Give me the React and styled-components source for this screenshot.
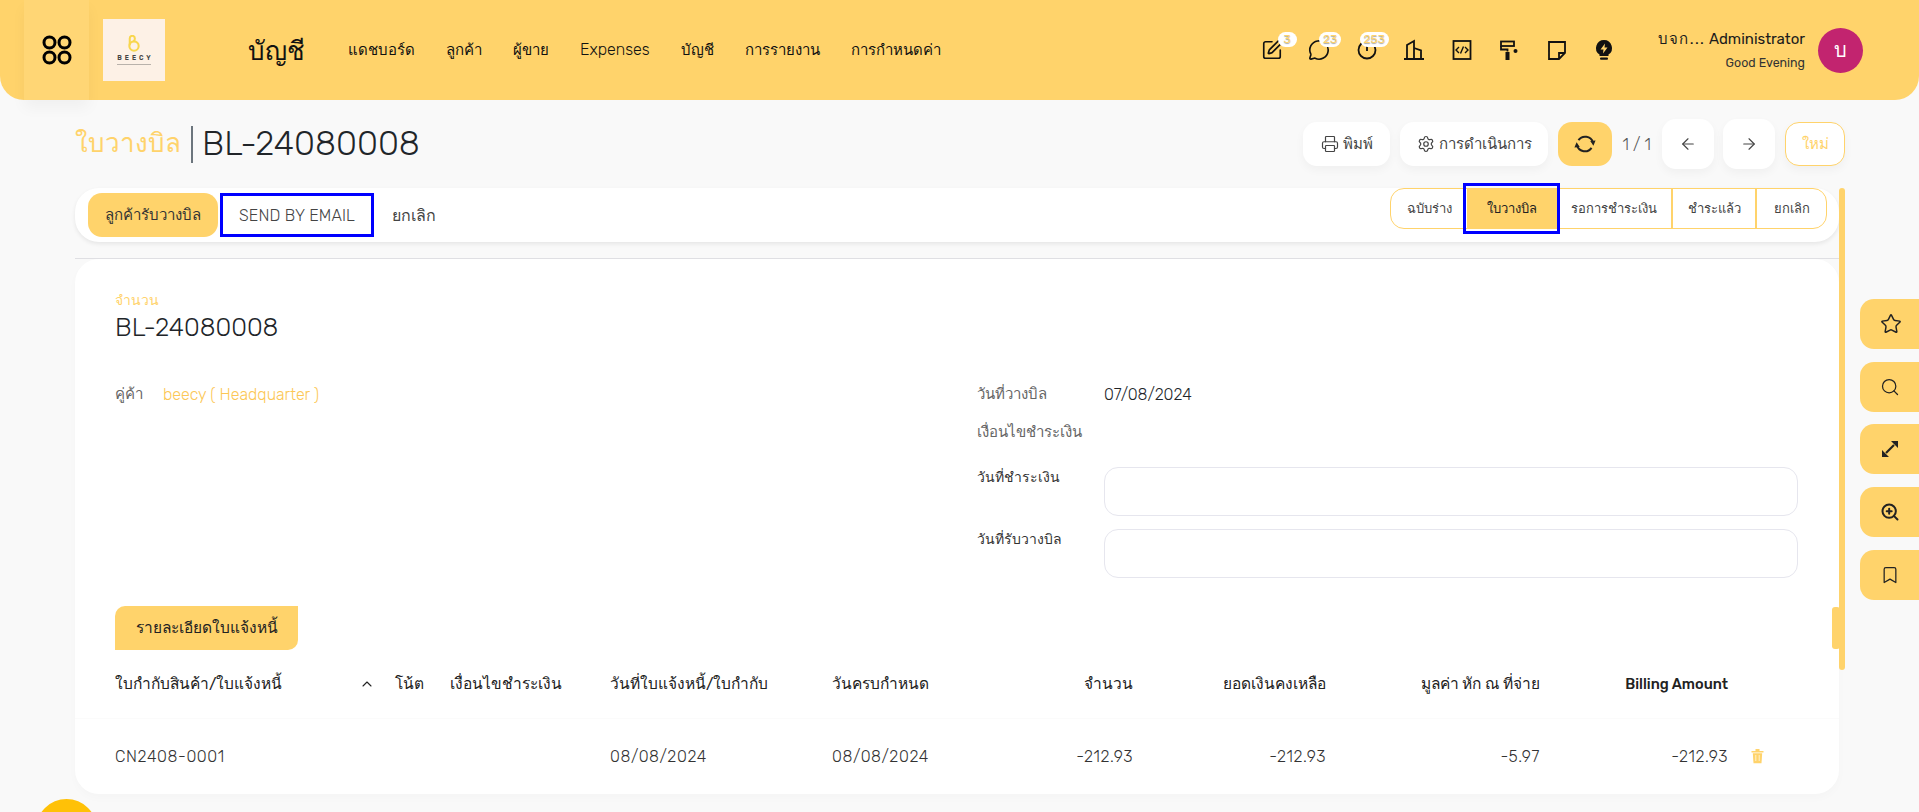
import React from 'react';
import styled, { createGlobalStyle } from 'styled-components';
import {
  ArrowLeft,
  ArrowRight,
  ChevronUp,
  Printer,
  Search,
  Settings,
  SquarePen,
  MessageCircle,
  Star,
  Bookmark,
  ZoomIn,
} from 'lucide-react';

const YELLOW = '#ffd36b';
const FONT = 'Rubik, Inter, "Noto Sans", "Liberation Sans", sans-serif';

const GlobalStyle = createGlobalStyle`
  html, body {
    margin: 0;
    height: 812px;
    overflow: hidden;
    background: #f9f9f9;
    font-family: ${FONT};
    color: #212529;
  }
  * { box-sizing: border-box; }
`;

const Page = styled.div`
  position: relative;
  width: 1919px;
  height: 812px;
  overflow: hidden;
`;

// Header
const Header = styled.header`
  height: 100px;
  padding-left: 24px;
  display: flex;
  align-items: center;
  background: ${YELLOW};
  border-radius: 0 0 24px 24px;
`;

const AppsButton = styled.div`
  width: 65px;
  height: 100px;
  display: flex;
  align-items: center;
  justify-content: center;
  background: #ffd675;
  box-shadow: 0 8px 14px rgba(0, 0, 0, 0.04);
`;

const LogoBox = styled.div`
  width: 62px;
  height: 62px;
  margin-left: 14px;
  background: #fdf1e6;
  display: flex;
  flex-direction: column;
  align-items: center;
  justify-content: center;
`;

const LogoText = styled.span`
  font-size: 6.5px;
  line-height: 8px;
  font-weight: 600;
  letter-spacing: 3px;
  margin-right: -3px;
  color: #444;
  margin-top: 2px;
`;

const LogoTagline = styled.span`
  width: 34px;
  height: 1px;
  margin-top: 2px;
  background: #b9b2ab;
`;

const ModuleTitle = styled.div`
  width: 100px;
  margin-left: 83px;
  font-size: 26px;
  font-weight: 300;
  color: #111;
`;

const Nav = styled.nav`
  display: flex;
  gap: 31px;
`;

const NavItem = styled.span`
  font-size: ${(p) => (p.$latin ? 16 : 15)}px;
  line-height: 22px;
  font-weight: 300;
  color: #111;
`;

const IconBar = styled.div`
  margin-left: auto;
  display: flex;
  gap: 25.5px;
`;

const IconSlot = styled.div`
  position: relative;
  width: 22px;
  height: 22px;
  color: #111;
`;

const Badge = styled.span`
  position: absolute;
  top: -7px;
  left: ${(p) => p.$left}px;
  min-width: 19px;
  height: 15px;
  padding: 0 4px;
  border-radius: 8px;
  background: #fff;
  color: ${YELLOW};
  font-size: 12px;
  line-height: 15px;
  text-align: center;
  text-shadow: 0 1px 1px rgba(0, 0, 0, 0.35);
`;

const UserBlock = styled.div`
  width: 180px;
  text-align: right;
  margin-left: 10px;
`;

const UserName = styled.div`
  font-size: 15px;
  line-height: 22px;
  color: #1c1c1c;
`;

const CompanyShort = styled.span`
  letter-spacing: 1.4px;
`;

const Greeting = styled.div`
  font-size: 12.4px;
  line-height: 18px;
  margin-top: 4px;
  color: #333;
`;

const Avatar = styled.div`
  width: 45px;
  height: 45px;
  margin: 0 56px 0 13px;
  border-radius: 50%;
  background: #c2246f;
  color: #fff;
  font-size: 20px;
  display: flex;
  align-items: center;
  justify-content: center;
`;

// Page content
const Main = styled.main`
  padding: 19px 74px 0 75px;
`;

const TitleRow = styled.div`
  height: 50px;
  display: flex;
  align-items: center;
  justify-content: space-between;
`;

const Title = styled.h1`
  margin: 0;
  display: flex;
  align-items: center;
  font-size: 34px;
  line-height: 40px;
  font-weight: 300;
`;

const TitleModel = styled.span`
  color: ${YELLOW};
  font-size: 26px;
`;

const TitleBar = styled.span`
  width: 2px;
  height: 37px;
  margin: 0 9px 0 10px;
  background: #6c757d;
`;

const Actions = styled.div`
  display: flex;
  align-items: center;
  gap: 9.6px;
`;

const ActionButton = styled.button`
  height: ${(p) => (p.$tall ? 50 : 44)}px;
  width: ${(p) => p.$width}px;
  border: ${(p) => (p.$outline ? `1px solid ${YELLOW}` : 'none')};
  border-radius: 14px;
  background: ${(p) => (p.$primary ? YELLOW : '#fff')};
  color: ${(p) => (p.$outline ? YELLOW : '#444')};
  font: 400 15px ${FONT};
  display: flex;
  align-items: center;
  justify-content: center;
  gap: 4px;
  padding: 0;
  box-shadow: ${(p) => (p.$primary ? 'none' : '0 4px 10px rgba(0,0,0,0.04)')};
`;

const Pager = styled.span`
  font-size: 16px;
  font-weight: 300;
  color: #555;
  width: 31px;
  text-align: center;
  white-space: nowrap;
`;

const Body = styled.div`
  margin-top: 19px;
  display: flex;
  align-items: flex-start;
`;

const Column = styled.div`
  width: 1764px;
`;

const StatusBar = styled.div`
  height: 54px;
  padding-right: 12px;
  display: flex;
  justify-content: space-between;
  align-items: flex-start;
  background: #fff;
  border-radius: 24px;
  box-shadow: 0 2px 4px rgba(0, 0, 0, 0.08);
`;

const StatusActions = styled.div`
  display: flex;
  align-items: center;
  padding: 5px 0 0 13px;
`;

const PrimaryAction = styled.button`
  width: 130px;
  height: 44px;
  border: none;
  border-radius: 14px;
  background: ${YELLOW};
  color: #333;
  font: 400 15px ${FONT};
`;

const PlainAction = styled.button`
  height: 44px;
  width: ${(p) => p.$width}px;
  border: ${(p) => (p.$marked ? '3px solid #0000ff' : 'none')};
  background: transparent;
  color: #444;
  font: 300 16px ${FONT};
  letter-spacing: 0.15px;
  margin-left: 2px;
  padding: 0;
`;

const Steps = styled.div`
  display: flex;
  height: 41px;
  border: 1px solid ${YELLOW};
  border-radius: 14px;
`;

const Step = styled.div`
  position: relative;
  width: ${(p) => p.$width}px;
  display: flex;
  align-items: center;
  justify-content: center;
  font-size: 13px;
  color: ${(p) => (p.$active ? '#222' : '#444')};
  background: ${(p) => (p.$active ? YELLOW : 'transparent')};
  border-left: ${(p) => (p.$divided ? `2px solid ${YELLOW}` : 'none')};
`;

const StepMark = styled.span`
  position: absolute;
  inset: -6px -3px -6px -4px;
  border: 3px solid #0000ff;
`;

const SheetRule = styled.hr`
  margin: 16px 0 0;
  height: 1px;
  border: none;
  background: #dfdfe3;
`;

const Sheet = styled.section`
  height: 535px;
  padding: 33px 0 0 40px;
  background: #fff;
  border-radius: 24px;
  box-shadow: 0 4px 10px rgba(0, 0, 0, 0.02);
`;

const FieldCaption = styled.div`
  font-size: 14px;
  line-height: 18px;
  color: ${YELLOW};
`;

const DocName = styled.div`
  font-size: 25.5px;
  line-height: 35px;
  font-weight: 300;
  color: #212529;
`;

const FormGrid = styled.div`
  margin-top: 35px;
  display: grid;
  grid-template-columns: 862px 821px;
`;

const PartnerRow = styled.div`
  display: flex;
  height: 28px;
  align-items: center;
  gap: 20px;
`;

const MutedLabel = styled.span`
  width: ${(p) => p.$width || 'auto'};
  font-size: 15px;
  font-weight: 300;
  color: #666;
`;

const PartnerLink = styled.span`
  font-size: 16px;
  font-weight: 300;
  color: #fcc755;
`;

const InfoRow = styled.div`
  display: flex;
  align-items: center;
  height: 28px;
  margin-bottom: 10px;
`;

const InfoValue = styled.span`
  font-size: 16px;
  font-weight: 300;
  color: #212529;
`;

const InputRow = styled.div`
  display: flex;
  margin-top: ${(p) => p.$top}px;
`;

const InputLabel = styled.label`
  width: 127px;
  padding-top: 2px;
  font-size: 14px;
  line-height: 18px;
  color: #333;
`;

const TextBox = styled.div`
  width: 694px;
  height: 48.5px;
  border: 1px solid #e6e6ee;
  border-radius: 14px;
  background: #fff;
`;

const Tab = styled.div`
  width: 183px;
  height: 44px;
  margin-top: 28px;
  display: flex;
  align-items: center;
  justify-content: center;
  background: ${YELLOW};
  border-radius: 10px 0 10px 0;
  font-size: 15.5px;
  color: #222;
`;

const TableRow = styled.div`
  display: grid;
  grid-template-columns: 280px 55px 160px 222px 100px 201px 193px 214px 188px 70px;
  align-items: center;
  height: ${(p) => p.$height}px;
  margin-left: -40px;
  padding-left: 40px;
  border-top: ${(p) => (p.$lined ? '1px solid #fbfbfb' : 'none')};
  font-size: ${(p) => (p.$head ? 15.5 : 16)}px;
  font-weight: ${(p) => (p.$head ? 400 : 300)};
  letter-spacing: ${(p) => (p.$head ? 0 : 0.6)}px;
  color: ${(p) => (p.$head ? '#222' : '#333')};
`;

const Cell = styled.div`
  text-align: ${(p) => (p.$right ? 'right' : 'left')};
  font-weight: ${(p) => (p.$bold ? 500 : 'inherit')};
  font-size: ${(p) => (p.$bold ? '14.6px' : 'inherit')};
  white-space: nowrap;
`;

const SortCell = styled(Cell)`
  display: flex;
  justify-content: space-between;
  align-items: center;
  padding-right: 20px;
`;

const TrashCell = styled.div`
  padding-left: 22px;
  display: flex;
`;

const ScrollTrack = styled.div`
  position: relative;
  width: 6px;
  height: 482px;
  background: ${YELLOW};
  border-radius: 3px;
`;

const ScrollThumb = styled.span`
  position: absolute;
  left: -7px;
  top: 419px;
  width: 8px;
  height: 42px;
  background: ${YELLOW};
  border-radius: 3px;
`;

// Floating things
const SideRail = styled.aside`
  position: absolute;
  right: 0;
  top: 299px;
  width: 59px;
  display: flex;
  flex-direction: column;
  gap: 12.7px;
`;

const RailButton = styled.div`
  height: 50px;
  padding-left: 20px;
  display: flex;
  align-items: center;
  background: ${YELLOW};
  border-radius: 14px 0 0 14px;
  color: #222;
`;

const HelpBubble = styled.div`
  position: absolute;
  left: 36px;
  top: 799px;
  width: 61px;
  height: 61px;
  border-radius: 50%;
  background: #ffc107;
`;

const AppsIcon = () => (
  <svg width="32" height="32" viewBox="0 0 32 32" fill="none" stroke="#000" strokeWidth="3">
    <circle cx="8.5" cy="8.5" r="5.5" />
    <circle cx="23.5" cy="8.5" r="5.5" />
    <circle cx="8.5" cy="23.5" r="5.5" />
    <circle cx="23.5" cy="23.5" r="5.5" />
  </svg>
);

const BeecyMark = () => (
  <svg width="12" height="17" viewBox="0 0 14 20" fill="none" stroke="#f8d64e" strokeWidth="2.4">
    <path d="M2 12V4a3 3 0 0 1 6 0c0 1.500-.5 2.500-1.500 3.500" />
    <circle cx="7" cy="13" r="5.500" />
  </svg>
);

const SyncIcon = () => (
  <svg width="24" height="24" viewBox="0 0 22 22" fill="none" stroke="#222" strokeWidth="1.8">
    <path d="M5 7.500A7.500 7.500 0 0 1 18.300 9.500M17 14.500A7.500 7.500 0 0 1 3.700 12.500" />
    <path d="M18.700 12.500l-2.900-4.200 4.900-.4zM3.300 9.500l2.900 4.200-4.900.4z" fill="#222" stroke="none" />
  </svg>
);

const ClockDot = () => (
  <svg width="22" height="22" viewBox="0 0 22 22" fill="none" stroke="#111" strokeWidth="1.8">
    <circle cx="11" cy="11" r="8.500" />
    <path d="M11 7v5" />
  </svg>
);

const Buildings = () => (
  <svg width="22" height="22" viewBox="0 0 22 22" fill="none" stroke="#111" strokeWidth="1.8">
    <path d="M1 20h20M4 20V6l7-4v18M11 9l7 2.500V20" />
  </svg>
);

const CodeFile = () => (
  <svg width="22" height="22" viewBox="0 0 22 22" fill="none" stroke="#111" strokeWidth="1.8">
    <rect x="2.500" y="2" width="17" height="18" />
    <path d="M8 8l-3 3 3 3M14 8l3 3-3 3M12.500 7.500l-3 7" strokeWidth="1.400" />
  </svg>
);

const Roller = () => (
  <svg width="22" height="22" viewBox="0 0 22 22" fill="#111" stroke="#111">
    <rect x="3" y="2.500" width="13" height="4.500" fill="none" strokeWidth="1.800" />
    <path d="M3 7v3.500h6.500v2" fill="none" strokeWidth="1.800" />
    <rect x="7.500" y="13" width="4" height="8" stroke="none" />
    <circle cx="17.500" cy="12" r="2" stroke="none" />
  </svg>
);

const Note = () => (
  <svg width="22" height="22" viewBox="0 0 22 22" fill="none" stroke="#111" strokeWidth="1.800">
    <path d="M3 3h16v11l-6 6H3zM19 14h-6v6" />
  </svg>
);

const BoltBulb = () => (
  <svg width="22" height="22" viewBox="0 0 22 22" fill="#111">
    <path d="M11 1a8 8 0 0 0-4.500 14.600V17h9v-1.400A8 8 0 0 0 11 1z" />
    <path d="M12 4.500L7.500 10.500h3L10 14.500l4.500-6h-3z" fill={YELLOW} />
    <rect x="7" y="18.500" width="8" height="2.200" rx="1" />
  </svg>
);

const Expand = () => (
  <svg width="20" height="20" viewBox="0 0 20 20" fill="#222" stroke="#222">
    <path d="M6 14l8-8" strokeWidth="2.200" />
    <path d="M11 2h7v7zM2 11v7h7z" stroke="none" />
  </svg>
);

const TrashIcon = () => (
  <svg width="15" height="16" viewBox="0 0 15 16" fill={YELLOW}>
    <path d="M1.500 3h12v1.500h-12zM5.500 1h4v2h-4z" />
    <path d="M2.800 5.200h9.400l-.7 10H3.500z" />
    <path d="M5.800 7v6M9.200 7v6" stroke="#fff2cc" strokeWidth="1" />
  </svg>
);

const headerIcons = [
  { icon: <SquarePen size={22} strokeWidth={1.8} />, badge: '3', left: 17 },
  { icon: <MessageCircle size={22} strokeWidth={1.8} />, badge: '23', left: 11 },
  { icon: <ClockDot />, badge: '253', left: 4 },
  { icon: <Buildings /> },
  { icon: <CodeFile /> },
  { icon: <Roller /> },
  { icon: <Note /> },
  { icon: <BoltBulb /> },
];

const navItems = ['แดชบอร์ด', 'ลูกค้า', 'ผู้ขาย', 'Expenses', 'บัญชี', 'การรายงาน', 'การกำหนดค่า'];

const steps = [
  { label: 'ฉบับร่าง', width: 76 },
  { label: 'ใบวางบิล', width: 90, active: true },
  { label: 'รอการชำระเงิน', width: 114 },
  { label: 'ชำระแล้ว', width: 84, divided: true },
  { label: 'ยกเลิก', width: 71, divided: true },
];

export default function App() {
  return (
    <Page>
      <GlobalStyle />
      <Header>
        <AppsButton>
          <AppsIcon />
        </AppsButton>
        <LogoBox>
          <BeecyMark />
          <LogoText>BEECY</LogoText>
          <LogoTagline />
        </LogoBox>
        <ModuleTitle>บัญชี</ModuleTitle>
        <Nav>
          {navItems.map((item) => (
            <NavItem key={item} $latin={item === 'Expenses'}>
              {item}
            </NavItem>
          ))}
        </Nav>
        <IconBar>
          {headerIcons.map((item, i) => (
            <IconSlot key={i}>
              {item.icon}
              {item.badge && <Badge $left={item.left}>{item.badge}</Badge>}
            </IconSlot>
          ))}
        </IconBar>
        <UserBlock>
          <UserName>
            <CompanyShort>บจก...</CompanyShort> Administrator
          </UserName>
          <Greeting>Good Evening</Greeting>
        </UserBlock>
        <Avatar>บ</Avatar>
      </Header>

      <Main>
        <TitleRow>
          <Title>
            <TitleModel>ใบวางบิล</TitleModel>
            <TitleBar />
            BL-24080008
          </Title>
          <Actions>
            <ActionButton $width={87}>
              <Printer size={18} strokeWidth={1.6} />
              พิมพ์
            </ActionButton>
            <ActionButton $width={148}>
              <Settings size={18} strokeWidth={1.6} />
              การดำเนินการ
            </ActionButton>
            <ActionButton $width={54} $primary>
              <SyncIcon />
            </ActionButton>
            <Pager>1 / 1</Pager>
            <ActionButton $width={52} $tall>
              <ArrowLeft size={18} strokeWidth={1.5} />
            </ActionButton>
            <ActionButton $width={52} $tall>
              <ArrowRight size={18} strokeWidth={1.5} />
            </ActionButton>
            <ActionButton $width={60} $outline>
              ใหม่
            </ActionButton>
          </Actions>
        </TitleRow>

        <Body>
          <Column>
            <StatusBar>
              <StatusActions>
                <PrimaryAction>ลูกค้ารับวางบิล</PrimaryAction>
                <PlainAction $width={154} $marked>
                  SEND BY EMAIL
                </PlainAction>
                <PlainAction $width={76}>ยกเลิก</PlainAction>
              </StatusActions>
              <Steps>
                {steps.map((step) => (
                  <Step
                    key={step.label}
                    $width={step.width}
                    $active={step.active}
                    $divided={step.divided}
                  >
                    {step.active && <StepMark />}
                    {step.label}
                  </Step>
                ))}
              </Steps>
            </StatusBar>

            <SheetRule />
            <Sheet>
              <FieldCaption>จำนวน</FieldCaption>
              <DocName>BL-24080008</DocName>
              <FormGrid>
                <PartnerRow>
                  <MutedLabel>คู่ค้า</MutedLabel>
                  <PartnerLink>beecy ( Headquarter )</PartnerLink>
                </PartnerRow>
                <div>
                  <InfoRow>
                    <MutedLabel $width="127px">วันที่วางบิล</MutedLabel>
                    <InfoValue>07/08/2024</InfoValue>
                  </InfoRow>
                  <InfoRow>
                    <MutedLabel $width="127px">เงื่อนไขชำระเงิน</MutedLabel>
                  </InfoRow>
                  <InputRow $top={21}>
                    <InputLabel>วันที่ชำระเงิน</InputLabel>
                    <TextBox />
                  </InputRow>
                  <InputRow $top={13.5}>
                    <InputLabel>วันที่รับวางบิล</InputLabel>
                    <TextBox />
                  </InputRow>
                </div>
              </FormGrid>

              <Tab>รายละเอียดใบแจ้งหนี้</Tab>

              <TableRow $head $height={68}>
                <SortCell>
                  ใบกำกับสินค้า/ใบแจ้งหนี้
                  <ChevronUp size={16} strokeWidth={1.6} />
                </SortCell>
                <Cell>โน้ต</Cell>
                <Cell>เงื่อนไขชำระเงิน</Cell>
                <Cell>วันที่ใบแจ้งหนี้/ใบกำกับ</Cell>
                <Cell>วันครบกำหนด</Cell>
                <Cell $right>จำนวน</Cell>
                <Cell $right>ยอดเงินคงเหลือ</Cell>
                <Cell $right>มูลค่า หัก ณ ที่จ่าย</Cell>
                <Cell $right $bold>
                  Billing Amount
                </Cell>
                <div />
              </TableRow>
              <TableRow $height={76} $lined>
                <Cell>CN2408-0001</Cell>
                <Cell />
                <Cell />
                <Cell>08/08/2024</Cell>
                <Cell>08/08/2024</Cell>
                <Cell $right>-212.93</Cell>
                <Cell $right>-212.93</Cell>
                <Cell $right>-5.97</Cell>
                <Cell $right>-212.93</Cell>
                <TrashCell>
                  <TrashIcon />
                </TrashCell>
              </TableRow>
            </Sheet>
          </Column>
          <ScrollTrack>
            <ScrollThumb />
          </ScrollTrack>
        </Body>
      </Main>

      <SideRail>
        <RailButton>
          <Star size={22} strokeWidth={1.6} />
        </RailButton>
        <RailButton>
          <Search size={20} strokeWidth={1.5} />
        </RailButton>
        <RailButton>
          <Expand />
        </RailButton>
        <RailButton>
          <ZoomIn size={20} strokeWidth={2.4} />
        </RailButton>
        <RailButton>
          <Bookmark size={20} strokeWidth={1.5} />
        </RailButton>
      </SideRail>
      <HelpBubble />
    </Page>
  );
}
